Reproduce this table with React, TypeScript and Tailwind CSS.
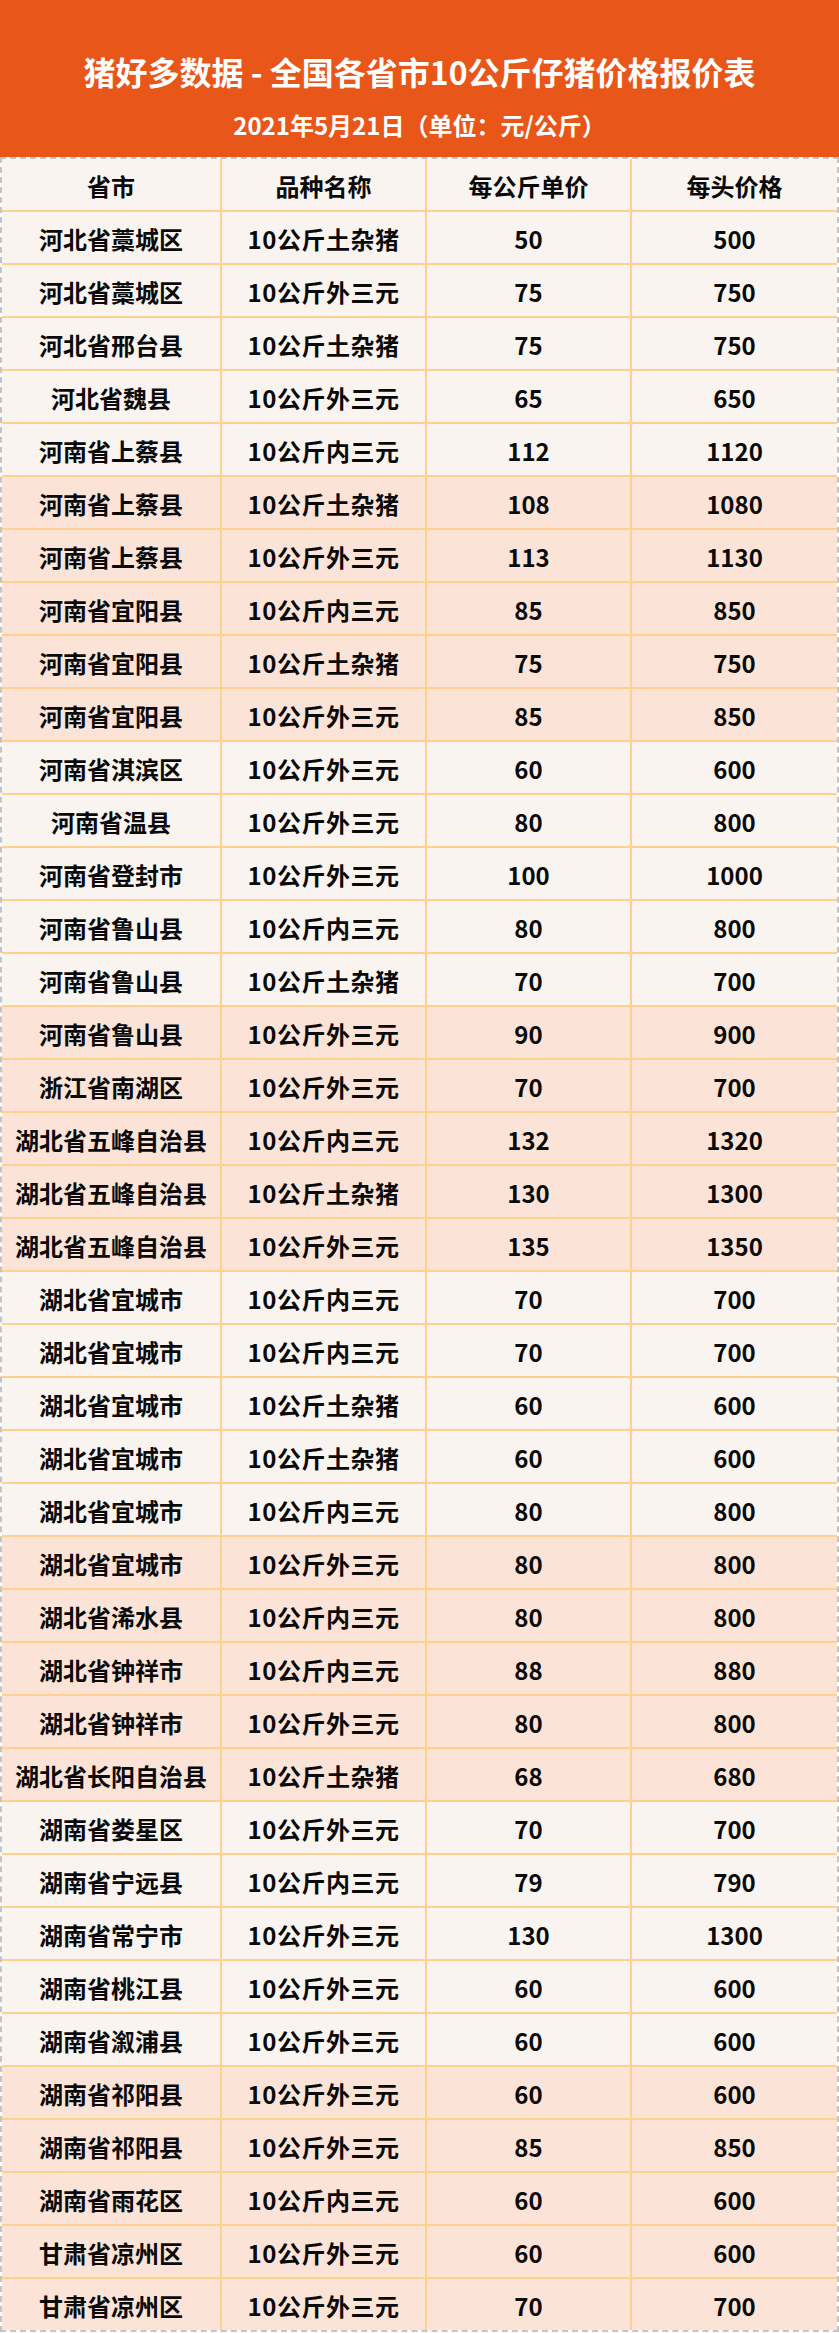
import React from "react";

type Row = [string, string, string, string];

const rows: Row[] = [
  ["河北省藁城区", "10公斤土杂猪", "50", "500"],
  ["河北省藁城区", "10公斤外三元", "75", "750"],
  ["河北省邢台县", "10公斤土杂猪", "75", "750"],
  ["河北省魏县", "10公斤外三元", "65", "650"],
  ["河南省上蔡县", "10公斤内三元", "112", "1120"],
  ["河南省上蔡县", "10公斤土杂猪", "108", "1080"],
  ["河南省上蔡县", "10公斤外三元", "113", "1130"],
  ["河南省宜阳县", "10公斤内三元", "85", "850"],
  ["河南省宜阳县", "10公斤土杂猪", "75", "750"],
  ["河南省宜阳县", "10公斤外三元", "85", "850"],
  ["河南省淇滨区", "10公斤外三元", "60", "600"],
  ["河南省温县", "10公斤外三元", "80", "800"],
  ["河南省登封市", "10公斤外三元", "100", "1000"],
  ["河南省鲁山县", "10公斤内三元", "80", "800"],
  ["河南省鲁山县", "10公斤土杂猪", "70", "700"],
  ["河南省鲁山县", "10公斤外三元", "90", "900"],
  ["浙江省南湖区", "10公斤外三元", "70", "700"],
  ["湖北省五峰自治县", "10公斤内三元", "132", "1320"],
  ["湖北省五峰自治县", "10公斤土杂猪", "130", "1300"],
  ["湖北省五峰自治县", "10公斤外三元", "135", "1350"],
  ["湖北省宜城市", "10公斤内三元", "70", "700"],
  ["湖北省宜城市", "10公斤内三元", "70", "700"],
  ["湖北省宜城市", "10公斤土杂猪", "60", "600"],
  ["湖北省宜城市", "10公斤土杂猪", "60", "600"],
  ["湖北省宜城市", "10公斤内三元", "80", "800"],
  ["湖北省宜城市", "10公斤外三元", "80", "800"],
  ["湖北省浠水县", "10公斤内三元", "80", "800"],
  ["湖北省钟祥市", "10公斤内三元", "88", "880"],
  ["湖北省钟祥市", "10公斤外三元", "80", "800"],
  ["湖北省长阳自治县", "10公斤土杂猪", "68", "680"],
  ["湖南省娄星区", "10公斤外三元", "70", "700"],
  ["湖南省宁远县", "10公斤内三元", "79", "790"],
  ["湖南省常宁市", "10公斤外三元", "130", "1300"],
  ["湖南省桃江县", "10公斤外三元", "60", "600"],
  ["湖南省溆浦县", "10公斤外三元", "60", "600"],
  ["湖南省祁阳县", "10公斤外三元", "60", "600"],
  ["湖南省祁阳县", "10公斤外三元", "85", "850"],
  ["湖南省雨花区", "10公斤内三元", "60", "600"],
  ["甘肃省凉州区", "10公斤外三元", "60", "600"],
  ["甘肃省凉州区", "10公斤外三元", "70", "700"],
];

const font = { fontFamily: '"Noto Sans CJK SC", "Noto Sans", sans-serif' };

export default function App() {
  return (
    <div className="w-[839px] bg-white" style={font}>
      <div className="h-[157px] bg-[#E9561A] flex flex-col items-center text-white">
        <div className="mt-[51px] h-[40px] flex items-center text-[32px] font-bold leading-[40px] whitespace-nowrap">
          猪好多数据 - 全国各省市10公斤仔猪价格报价表
        </div>
        <div className="mt-[19px] h-[30px] flex items-center text-[24px] font-bold leading-[30px] whitespace-nowrap">
          2021年5月21日（单位：元/公斤）
        </div>
      </div>
      <div className="border-2 border-dashed border-[#C4C4C4] text-[24px] font-bold text-[#0a0a0a]">
        <div className="grid grid-cols-[220px_205px_205px_205px] h-[53px] bg-[#F9F4F0] border-b-2 border-[#FFD08E]">
          {["省市", "品种名称", "每公斤单价", "每头价格"].map((h, i) => (
            <div
              key={h}
              className={
                "flex items-center justify-center pt-[3px] " +
                (i < 3 ? "border-r-2 border-[#FFD08E]" : "")
              }
            >
              {h}
            </div>
          ))}
        </div>
        {rows.map((r, idx) => {
          const peach = Math.floor(idx / 5) % 2 === 1;
          const last = idx === rows.length - 1;
          return (
            <div
              key={idx}
              className={
                "grid grid-cols-[220px_205px_205px_205px] " +
                (last ? "h-[51px] " : "h-[53px] border-b-2 border-[#FFD08E] ") +
                (peach ? "bg-[#FBE4D7]" : "bg-[#F9F4F0]")
              }
            >
              <div className="flex items-center justify-center pt-[3px] border-r-2 border-[#FFD08E] whitespace-nowrap">
                {r[0]}
              </div>
              <div className="flex items-center justify-center pt-[3px] border-r-2 border-[#FFD08E]">
                <span className="whitespace-nowrap tracking-[0.5px]">{r[1]}</span>
              </div>
              <div className="flex items-center justify-center pt-[3px] border-r-2 border-[#FFD08E]">
                {r[2]}
              </div>
              <div className="flex items-center justify-center pt-[3px]">{r[3]}</div>
            </div>
          );
        })}
      </div>
    </div>
  );
}
